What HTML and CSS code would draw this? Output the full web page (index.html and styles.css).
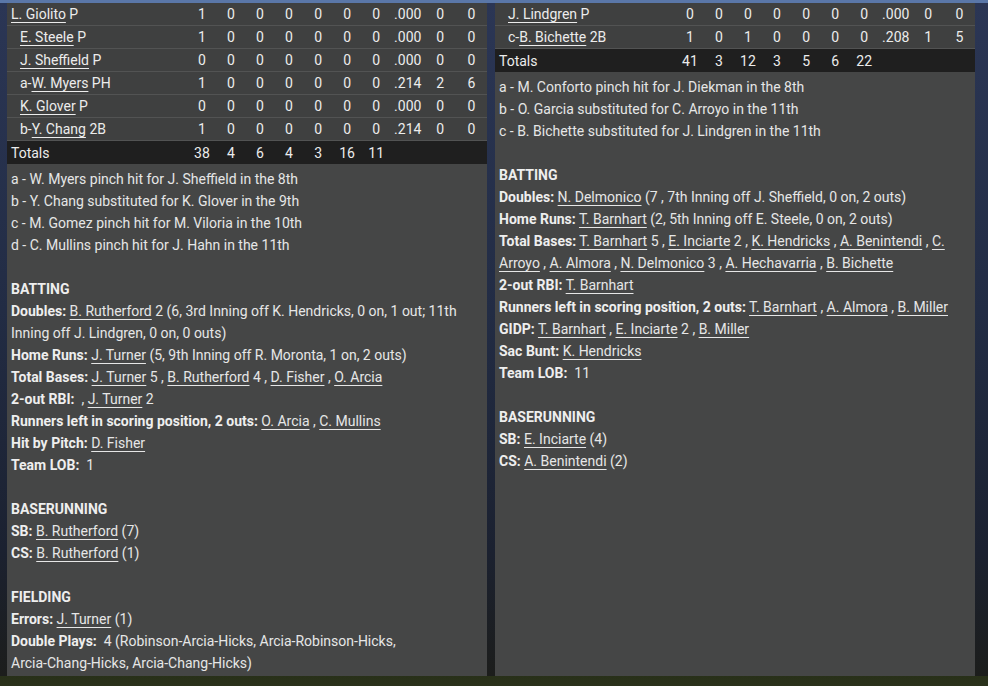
FILE: index.html
```html
<!DOCTYPE html>
<html lang="en">
<head>
<meta charset="utf-8">
<title>Box score</title>
<link rel="stylesheet" href="styles.css">
</head>
<body>
<div class="screen">
  <div class="panels">
    <section class="panel">
      <table class="box">
        <colgroup>
          <col class="c-name"><col class="c-n"><col class="c-n"><col class="c-n"><col class="c-n"><col class="c-n"><col class="c-n"><col class="c-n"><col class="c-avg"><col class="c-w"><col class="c-w">
        </colgroup>
        <tbody>
          <tr><td class="name"><a>L. Giolito</a> P</td><td>1</td><td>0</td><td>0</td><td>0</td><td>0</td><td>0</td><td>0</td><td>.000</td><td>0</td><td>0</td></tr>
          <tr><td class="name sub"><a>E. Steele</a> P</td><td>1</td><td>0</td><td>0</td><td>0</td><td>0</td><td>0</td><td>0</td><td>.000</td><td>0</td><td>0</td></tr>
          <tr><td class="name sub"><a>J. Sheffield</a> P</td><td>0</td><td>0</td><td>0</td><td>0</td><td>0</td><td>0</td><td>0</td><td>.000</td><td>0</td><td>0</td></tr>
          <tr><td class="name sub">a-<a>W. Myers</a> PH</td><td>1</td><td>0</td><td>0</td><td>0</td><td>0</td><td>0</td><td>0</td><td>.214</td><td>2</td><td>6</td></tr>
          <tr><td class="name sub"><a>K. Glover</a> P</td><td>0</td><td>0</td><td>0</td><td>0</td><td>0</td><td>0</td><td>0</td><td>.000</td><td>0</td><td>0</td></tr>
          <tr><td class="name sub">b-<a>Y. Chang</a> 2B</td><td>1</td><td>0</td><td>0</td><td>0</td><td>0</td><td>0</td><td>0</td><td>.214</td><td>0</td><td>0</td></tr>
          <tr class="totals"><td class="name">Totals</td><td>38</td><td>4</td><td>6</td><td>4</td><td>3</td><td>16</td><td>11</td><td></td><td></td><td></td></tr>
        </tbody>
      </table>
      <div class="notes">
        <p>a - W. Myers pinch hit for J. Sheffield in the 8th</p>
        <p>b - Y. Chang substituted for K. Glover in the 9th</p>
        <p>c - M. Gomez pinch hit for M. Viloria in the 10th</p>
        <p>d - C. Mullins pinch hit for J. Hahn in the 11th</p>
        <p class="blank"></p>
        <p class="head">BATTING</p>
        <p><b>Doubles:</b> <a>B. Rutherford</a> 2 (6, 3rd Inning off K. Hendricks, 0 on, 1 out; 11th<br>Inning off J. Lindgren, 0 on, 0 outs)</p>
        <p><b>Home Runs:</b> <a>J. Turner</a> (5, 9th Inning off R. Moronta, 1 on, 2 outs)</p>
        <p><b>Total Bases:</b> <a>J. Turner</a> 5 , <a>B. Rutherford</a> 4 , <a>D. Fisher</a> , <a>O. Arcia</a></p>
        <p><b>2-out RBI:</b> &nbsp;, <a>J. Turner</a> 2</p>
        <p><b>Runners left in scoring position, 2 outs:</b> <a>O. Arcia</a> , <a>C. Mullins</a></p>
        <p><b>Hit by Pitch:</b> <a>D. Fisher</a></p>
        <p><b>Team LOB:</b> &nbsp;1</p>
        <p class="blank"></p>
        <p class="head">BASERUNNING</p>
        <p><b>SB:</b> <a>B. Rutherford</a> (7)</p>
        <p><b>CS:</b> <a>B. Rutherford</a> (1)</p>
        <p class="blank"></p>
        <p class="head">FIELDING</p>
        <p><b>Errors:</b> <a>J. Turner</a> (1)</p>
        <p><b>Double Plays:</b> &nbsp;4 (Robinson-Arcia-Hicks, Arcia-Robinson-Hicks,<br>Arcia-Chang-Hicks, Arcia-Chang-Hicks)</p>
      </div>
    </section>
    <section class="panel">
      <table class="box">
        <colgroup>
          <col class="c-name"><col class="c-n"><col class="c-n"><col class="c-n"><col class="c-n"><col class="c-n"><col class="c-n"><col class="c-n"><col class="c-avg"><col class="c-w"><col class="c-w">
        </colgroup>
        <tbody>
          <tr><td class="name sub"><a>J. Lindgren</a> P</td><td>0</td><td>0</td><td>0</td><td>0</td><td>0</td><td>0</td><td>0</td><td>.000</td><td>0</td><td>0</td></tr>
          <tr><td class="name sub">c-<a>B. Bichette</a> 2B</td><td>1</td><td>0</td><td>1</td><td>0</td><td>0</td><td>0</td><td>0</td><td>.208</td><td>1</td><td>5</td></tr>
          <tr class="totals"><td class="name">Totals</td><td>41</td><td>3</td><td>12</td><td>3</td><td>5</td><td>6</td><td>22</td><td></td><td></td><td></td></tr>
        </tbody>
      </table>
      <div class="notes">
        <p>a - M. Conforto pinch hit for J. Diekman in the 8th</p>
        <p>b - O. Garcia substituted for C. Arroyo in the 11th</p>
        <p>c - B. Bichette substituted for J. Lindgren in the 11th</p>
        <p class="blank"></p>
        <p class="head">BATTING</p>
        <p><b>Doubles:</b> <a>N. Delmonico</a> (7 , 7th Inning off J. Sheffield, 0 on, 2 outs)</p>
        <p><b>Home Runs:</b> <a>T. Barnhart</a> (2, 5th Inning off E. Steele, 0 on, 2 outs)</p>
        <p><b>Total Bases:</b> <a>T. Barnhart</a> 5 , <a>E. Inciarte</a> 2 , <a>K. Hendricks</a> , <a>A. Benintendi</a> , <a>C.<br>Arroyo</a> , <a>A. Almora</a> , <a>N. Delmonico</a> 3 , <a>A. Hechavarria</a> , <a>B. Bichette</a></p>
        <p><b>2-out RBI:</b> <a>T. Barnhart</a></p>
        <p><b>Runners left in scoring position, 2 outs:</b> <a>T. Barnhart</a> , <a>A. Almora</a> , <a>B. Miller</a></p>
        <p><b>GIDP:</b> <a>T. Barnhart</a> , <a>E. Inciarte</a> 2 , <a>B. Miller</a></p>
        <p><b>Sac Bunt:</b> <a>K. Hendricks</a></p>
        <p><b>Team LOB:</b> &nbsp;11</p>
        <p class="blank"></p>
        <p class="head">BASERUNNING</p>
        <p><b>SB:</b> <a>E. Inciarte</a> (4)</p>
        <p><b>CS:</b> <a>A. Benintendi</a> (2)</p>
      </div>
    </section>
  </div>
</div>
</body>
</html>
```
FILE: styles.css
```css
html, body {
  margin: 0;
  padding: 0;
}
body {
  width: 988px;
  height: 686px;
  overflow: hidden;
  background: #1b2030;
  font-family: Roboto, "Noto Sans", sans-serif;
  font-size: 14px;
  color: #e4e4e4;
}
.screen {
  width: 988px;
  height: 686px;
  box-sizing: border-box;
  border-top: 3px solid #5a77a8;
  background:
    linear-gradient(to bottom, rgba(0,0,0,0) 0, rgba(0,0,0,0) 673px, #283019 673px, #2c331d 686px),
    linear-gradient(to bottom, #2b3655 0%, #222c44 45%, #1b2130 80%, #1c1d1a 100%);
}
.panels {
  display: flex;
  gap: 8px;
  padding-left: 7px;
  height: 673px;
}
.panel {
  width: 480px;
  height: 673px;
  background: #454646;
  overflow: hidden;
}
.box {
  width: 480px;
  table-layout: fixed;
  border-collapse: collapse;
  border-spacing: 0;
}
.c-name { width: 180px; }
.c-n { width: 29px; }
.c-avg { width: 34px; }
.c-w { width: 31px; }
.box td {
  height: 22px;
  padding: 0;
  text-align: center;
  background: #3f4040;
  border-bottom: 1px solid #525353;
  white-space: nowrap;
  color: #ececec;
  line-height: 22px;
}
.box td.name {
  text-align: left;
  padding-left: 4px;
}
.box td.sub {
  padding-left: 13px;
}
.box tr.totals td {
  background: #1f1f1f;
  border-bottom: none;
  height: 23px;
}
a {
  color: inherit;
  text-decoration: underline;
  text-underline-offset: 3px;
  text-decoration-thickness: 1px;
}
.notes {
  padding: 4px 4px 0 4px;
}
.notes p {
  margin: 0;
  line-height: 22px;
  white-space: nowrap;
  color: #e6e6e6;
}
.notes p.blank {
  height: 22px;
}
.notes b, .notes .head {
  font-weight: 700;
  color: #eeeeee;
}
```
